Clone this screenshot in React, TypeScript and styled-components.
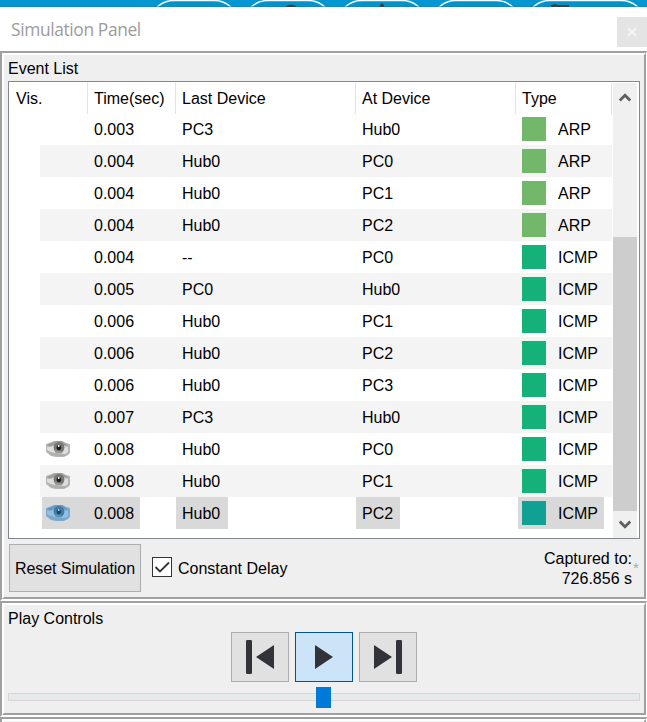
import React from 'react';
import styled, { createGlobalStyle, css } from 'styled-components';

const GlobalStyle = createGlobalStyle`
  * { box-sizing: border-box; }
  html, body { margin: 0; padding: 0; background: #fff; overflow: hidden; }
  body { font: 16px/20px "Liberation Sans", Arial, sans-serif; color: #000; }
  svg { display: block; flex: none; }
  button { font: inherit; color: inherit; padding: 0; border-radius: 0; }
`;

const Window = styled.main`
  width: 647px;
  height: 722px;
  overflow: hidden;
  display: flex;
  flex-direction: column;
`;

const Ribbon = styled.div`
  flex: none;
  height: 7px;
  background: #0496d0;
`;

const TitleBar = styled.header`
  flex: none;
  height: 44px;
  padding-left: 11px;
  display: flex;
  align-items: center;
  justify-content: space-between;
  background: #fff;
`;

const Title = styled.h1`
  margin: 0;
  font: 400 17.4px/24px "Open Sans", "Noto Sans", sans-serif;
  letter-spacing: -0.38px;
  color: #9c9c9c;
`;

const CloseButton = styled.button`
  width: 30px;
  height: 30px;
  margin-top: 5px;
  border: 0;
  background: #e4e4e4;
  display: flex;
  align-items: center;
  justify-content: center;
`;

const Frame = styled.section<{ $height: number }>`
  flex: none;
  height: ${(p) => p.$height}px;
  border: solid #fff;
  border-width: 2px 1px 2px 2px;
  border-top-color: #a0a0a0;
  border-left-color: #a0a0a0;
  display: flex;
`;

const FrameBody = styled.div`
  flex: 1;
  min-width: 0;
  border: 2px solid #a0a0a0;
  border-top-color: #fff;
  border-left-color: #fff;
  background: #efefef;
  padding: 0 4px;
`;

const SectionTitle = styled.h2`
  margin: 0;
  padding-top: 4px;
  height: 26px;
  font-size: 16px;
  font-weight: 400;
  line-height: 20px;
`;

const ListBox = styled.div`
  width: 632px;
  height: 458px;
  border: 1px solid #828790;
  background: #fff;
  display: flex;
`;

const Table = styled.div`
  width: 604px;
`;

const columns = css`
  display: grid;
  grid-template-columns: 79px 88px 180px 160px 96px;
`;

const HeaderRow = styled.div`
  ${columns}
  height: 31px;
  padding-top: 1px;
`;

const HeaderCell = styled.div`
  border-right: 1px solid #e2e2e2;
  padding-left: 6px;
  line-height: 31px;

  &:first-child { padding-left: 7px; }
`;

const Row = styled.div<{ $striped: boolean }>`
  ${columns}
  grid-template-columns: 48px 88px 180px 160px 96px;
  height: 32px;
  margin: 0 1px 0 31px;
  background: ${(p) => (p.$striped ? '#f4f4f4' : '#fff')};
`;

const Cell = styled.div<{ $selected: boolean; $lead?: number; $tail?: number }>`
  justify-self: start;
  display: flex;
  align-items: center;
  height: 32px;
  margin-left: ${(p) => p.$lead ?? 0}px;
  padding: 0 ${(p) => p.$tail ?? 6}px 0 ${(p) => 6 - (p.$lead ?? 0)}px;
  background: ${(p) => (p.$selected ? '#d9d9d9' : 'transparent')};
  white-space: nowrap;
`;

const CellText = styled.span`
  padding-top: 2px;
`;

const Swatch = styled.span<{ $color: string }>`
  width: 24px;
  height: 24px;
  margin-right: 12px;
  background: ${(p) => p.$color};
`;

const Scrollbar = styled.div`
  width: 24px;
  margin: 1px 0 0;
  background: #f0f0f0;
  display: flex;
  flex-direction: column;
  align-items: center;
`;

const ScrollArrow = styled.div`
  height: 26px;
  padding-top: 2px;
  display: flex;
  align-items: center;
`;

const ScrollThumb = styled.div`
  width: 24px;
  height: 274px;
  margin-top: 128px;
  background: #cdcdcd;
`;

const OptionsRow = styled.div`
  display: flex;
  padding: 5px 0 0 1px;
`;

const ResetButton = styled.button`
  width: 132px;
  height: 48px;
  padding-top: 2px;
  border: 1px solid #adadad;
  background: #e1e1e1;
  letter-spacing: -0.05px;
`;

const CheckLabel = styled.label`
  display: flex;
  align-items: center;
  gap: 6px;
  height: 20px;
  margin: 13px 0 0 11px;
`;

const CheckText = styled.span`
  padding-top: 3px;
`;

const CheckBox = styled.span`
  width: 20px;
  height: 20px;
  border: 1px solid #333;
  background: #fff;
`;

const Captured = styled.div`
  margin: 5px 0 0 auto;
  text-align: right;
`;

const Asterisk = styled.span`
  width: 8px;
  margin: 14px -1px 0 1px;
  color: #aaa;
  font-size: 15px;
`;

const Transport = styled.div`
  display: flex;
  justify-content: center;
  gap: 6px;
  margin-top: 1px;
`;

const TransportButton = styled.button<{ $active?: boolean }>`
  width: 58px;
  height: 50px;
  border: 1px solid ${(p) => (p.$active ? '#005499' : '#adadad')};
  background: ${(p) => (p.$active ? '#cce4f7' : '#e1e1e1')};
`;

const Slider = styled.div`
  position: relative;
  width: 632px;
  height: 8px;
  margin-top: 11px;
  border: 1px solid #d6d6d6;
  background: #e7eaea;
`;

const SliderThumb = styled.div`
  position: absolute;
  left: 307px;
  top: -7px;
  width: 15px;
  height: 21px;
  background: #007ad9;
`;

const EyeIcon = ({ blue }: { blue: boolean }) => {
  const c = blue
    ? { skin: '#7aabd1', white: '#92bfe2', lid: '#5e92ba', iris: '#477aa1', pupil: '#1b4a70', glint: '#9ccbee' }
    : { skin: '#b5b5b3', white: '#dededc', lid: '#92928f', iris: '#777776', pupil: '#1c1c1c', glint: '#f0f0f0' };
  return (
    <svg width="24" height="16" viewBox="0 0 24 16">
      <path d="M0 3 3 2 8 0H16L20 2 24 3V12L22 14 18 16H10L5 15 0 11Z" fill={c.skin} />
      <path d="M1 6 5 5 9 4 9 12 5 11 1 9Z" fill={c.white} />
      <path d="M18 5 22 6 22 11 19 13 16 13Z" fill={c.white} />
      <path d="M1 4 6 2 10 0H16L20 3 22 5 18 4 9 4 4 6Z" fill={c.lid} opacity=".7" />
      <path d="M3 11 8 13 14 14 20 13 19 15 14 15 7 14Z" fill={c.lid} opacity=".25" />
      <ellipse cx="13" cy="6.5" rx="5.4" ry="5.6" fill={c.iris} />
      <path d="M8.500 8 11 10 16 10.500 14 12 10 11Z" fill={c.glint} opacity=".35" />
      <ellipse cx="12.9" cy="6.6" rx="2.2" ry="2.7" fill={c.pupil} />
      <rect x="12" y="4" width="1.5" height="2" fill={c.glint} />
    </svg>
  );
};

const PlayShape = ({ kind }: { kind: 'back' | 'play' | 'forward' }) => (
  <svg width="56" height="48" viewBox="0 0 56 48" fill="#323338">
    {kind === 'back' && (
      <>
        <rect x="14" y="7" width="6" height="34" rx="1.3" />
        <path d="M42 12v24L24 24Z" />
      </>
    )}
    {kind === 'play' && <path d="M19 12v24L37 24Z" />}
    {kind === 'forward' && (
      <>
        <path d="M14 12v24L32 24Z" />
        <rect x="36" y="7" width="6" height="34" rx="1.3" />
      </>
    )}
  </svg>
);

const Chevron = ({ down }: { down?: boolean }) => (
  <svg width="12" height="10" viewBox="0 0 12 10" fill="none" stroke="#606060" strokeWidth="2.8">
    <path d={down ? 'M.8 1.5 6 6.8 11.2 1.5' : 'M.8 8.5 6 3.2 11.2 8.5'} />
  </svg>
);

const ARP = '#72b76a';
const ICMP = '#14b279';
const SELECTED_ICMP = '#10a194';

const events = [
  ['0.003', 'PC3', 'Hub0', 'ARP'],
  ['0.004', 'Hub0', 'PC0', 'ARP'],
  ['0.004', 'Hub0', 'PC1', 'ARP'],
  ['0.004', 'Hub0', 'PC2', 'ARP'],
  ['0.004', '--', 'PC0', 'ICMP'],
  ['0.005', 'PC0', 'Hub0', 'ICMP'],
  ['0.006', 'Hub0', 'PC1', 'ICMP'],
  ['0.006', 'Hub0', 'PC2', 'ICMP'],
  ['0.006', 'Hub0', 'PC3', 'ICMP'],
  ['0.007', 'PC3', 'Hub0', 'ICMP'],
  ['0.008', 'Hub0', 'PC0', 'ICMP'],
  ['0.008', 'Hub0', 'PC1', 'ICMP'],
  ['0.008', 'Hub0', 'PC2', 'ICMP'],
];

const pills = [
  [149, 90],
  [243, 90],
  [337, 90],
  [431, 90],
  [525, 121],
];

export default function App() {
  const last = events.length - 1;
  return (
    <>
      <GlobalStyle />
      <Window>
        <Ribbon>
          <svg width="647" height="7" viewBox="0 0 647 7">
            {pills.map(([x, w]) => (
              <rect key={x} x={x} y=".5" width={w} height="50" rx="25" fill="#0592c9" stroke="#f4fbfd" strokeWidth="1.5" />
            ))}
            <path d="M0 6.5H647" stroke="#0b85b7" strokeOpacity=".6" />
            <ellipse cx="291" cy="8" rx="6" ry="3.3" fill="#35424b" />
            <path d="M379.500 7 381 3.500h2L384.500 7Z" fill="#35424b" />
            <path d="M551 7V5l4-1 3 1h11v2Z" fill="#35424b" />
          </svg>
        </Ribbon>
        <TitleBar>
          <Title>Simulation Panel</Title>
          <CloseButton aria-label="Close">
            <svg width="10" height="8" viewBox="0 0 10 8" stroke="#f5f5f5" strokeWidth="2">
              <path d="M1 .5 9 7.5M9 .5 1 7.5" />
            </svg>
          </CloseButton>
        </TitleBar>

        <Frame $height={550}>
          <FrameBody>
            <SectionTitle>Event List</SectionTitle>
            <ListBox>
              <Table>
                <HeaderRow>
                  {['Vis.', 'Time(sec)', 'Last Device', 'At Device', 'Type'].map((h) => (
                    <HeaderCell key={h}>{h}</HeaderCell>
                  ))}
                </HeaderRow>
                {events.map(([time, from, at, type], i) => {
                  const sel = i === last;
                  return (
                    <Row key={i} $striped={i % 2 === 1}>
                      {sel ? (
                        <Cell $selected $lead={2} $tail={18}><EyeIcon blue /></Cell>
                      ) : (
                        <Cell $selected={false}>{i >= 10 && <EyeIcon blue={false} />}</Cell>
                      )}
                      <Cell $selected={sel}><CellText>{time}</CellText></Cell>
                      <Cell $selected={sel} $tail={7.9}><CellText>{from}</CellText></Cell>
                      <Cell $selected={sel} $tail={7}><CellText>{at}</CellText></Cell>
                      <Cell $selected={sel} $lead={2}>
                        <Swatch $color={sel ? SELECTED_ICMP : type === 'ARP' ? ARP : ICMP} />
                        <CellText>{type}</CellText>
                      </Cell>
                    </Row>
                  );
                })}
              </Table>
              <Scrollbar>
                <ScrollArrow><Chevron /></ScrollArrow>
                <ScrollThumb />
                <ScrollArrow><Chevron down /></ScrollArrow>
              </Scrollbar>
            </ListBox>
            <OptionsRow>
              <ResetButton>Reset Simulation</ResetButton>
              <CheckLabel>
                <CheckBox>
                  <svg width="18" height="18" viewBox="0 0 18 18" fill="none" stroke="#333" strokeWidth="1.8">
                    <path d="M2.5 9 7 13.5 16 4.5" />
                  </svg>
                </CheckBox>
                <CheckText>Constant Delay</CheckText>
              </CheckLabel>
              <Captured>
                Captured to:
                <br />
                726.856 s
              </Captured>
              <Asterisk>*</Asterisk>
            </OptionsRow>
          </FrameBody>
        </Frame>

        <Frame $height={116}>
          <FrameBody>
            <SectionTitle>Play Controls</SectionTitle>
            <Transport>
              <TransportButton aria-label="Back"><PlayShape kind="back" /></TransportButton>
              <TransportButton $active aria-label="Play"><PlayShape kind="play" /></TransportButton>
              <TransportButton aria-label="Forward"><PlayShape kind="forward" /></TransportButton>
            </Transport>
            <Slider><SliderThumb /></Slider>
          </FrameBody>
        </Frame>

        <Frame $height={60}>
          <FrameBody />
        </Frame>
      </Window>
    </>
  );
}
